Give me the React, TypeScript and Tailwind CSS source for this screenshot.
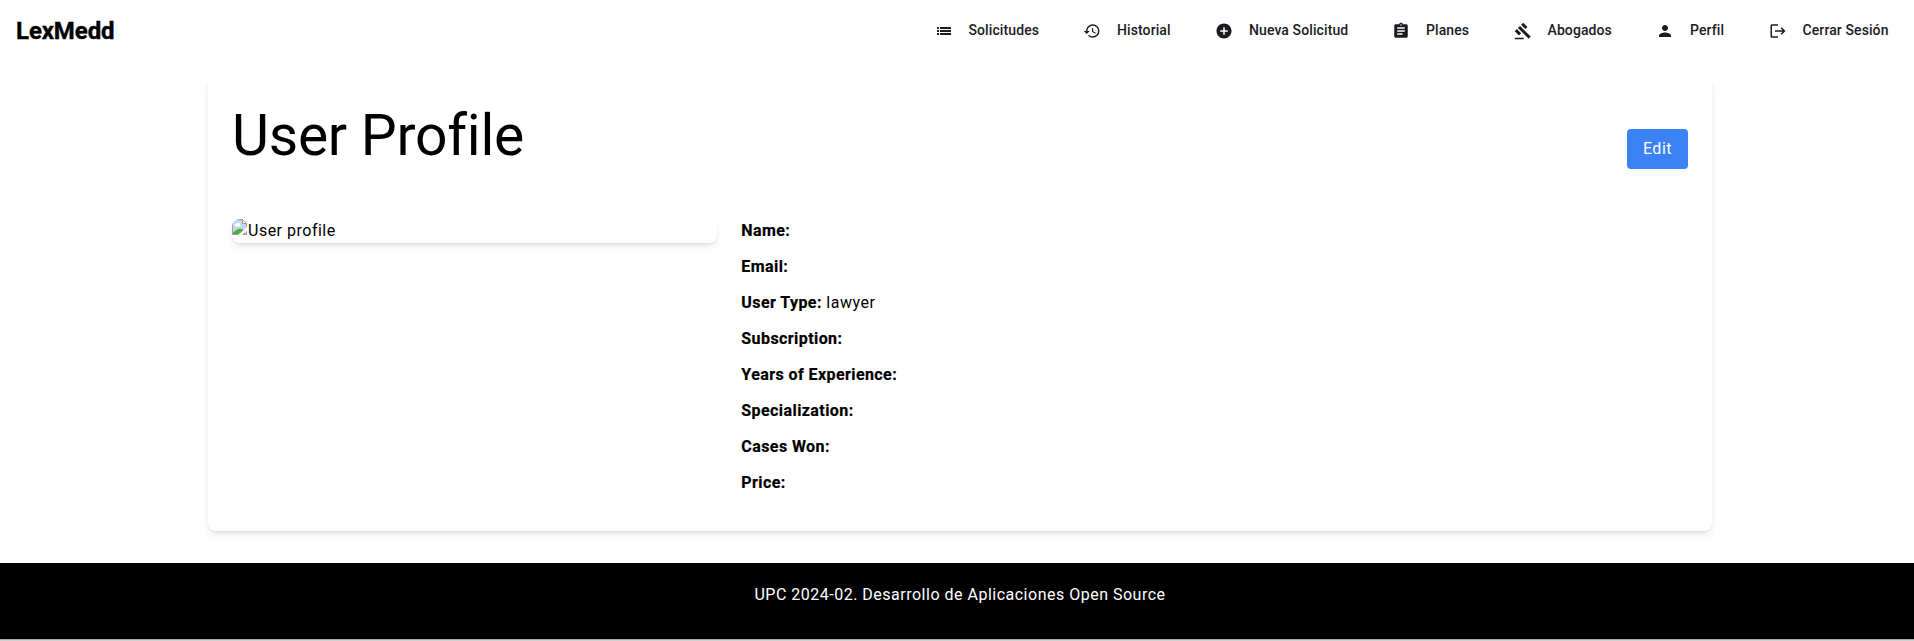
import type { IconType } from 'react-icons';
import { MdHistory, MdAddCircle, MdAssignment, MdGavel, MdPerson, MdLogout } from 'react-icons/md';

function ListIcon({ className }: { className?: string }) {
  return (
    <svg viewBox="0 0 18 18" fill="currentColor" shapeRendering="crispEdges" className={className} aria-hidden="true">
      <path d="M2 5h2v2H2zM2 8h2v2H2zM2 11h2v2H2zM5 5h11v2H5zM5 8h11v2H5zM5 11h11v2H5z" />
    </svg>
  );
}

const links: { label: string; Icon: IconType | typeof ListIcon; width: string }[] = [
  { label: 'Solicitudes', Icon: ListIcon, width: 'w-[148.5px]' },
  { label: 'Historial', Icon: MdHistory, width: 'w-[132px]' },
  { label: 'Nueva Solicitud', Icon: MdAddCircle, width: 'w-[177px]' },
  { label: 'Planes', Icon: MdAssignment, width: 'w-[121.5px]' },
  { label: 'Abogados', Icon: MdGavel, width: 'w-[142.5px]' },
  { label: 'Perfil', Icon: MdPerson, width: 'w-[112.5px]' },
  { label: 'Cerrar Sesión', Icon: MdLogout, width: 'w-[122px]' },
];

const fields = [
  { label: 'Name:' },
  { label: 'Email:' },
  { label: 'User Type:', value: 'lawyer' },
  { label: 'Subscription:' },
  { label: 'Years of Experience:' },
  { label: 'Specialization:' },
  { label: 'Cases Won:' },
  { label: 'Price:' },
];

function BrokenImage() {
  return (
    <svg width="16" height="16" viewBox="0 0 16 16" className="shrink-0" aria-hidden="true">
      <path d="M0.5 0.5H10.5L14.5 4.5V15.5H0.5Z" fill="#c3d5f6" stroke="#9b9b9b" />
      <path d="M2.5 6.5a2 2 0 0 1 2-2a2 2 0 0 1 3.5 1a1.2 1.2 0 0 1 0 2H3.5Z" fill="#fff" />
      <path d="M1 15V14C4 10 7 9 10 10L13 12V15Z" fill="#55ab3c" />
      <path d="M16 7L6 16H10L16 11Z" fill="#fff" />
      <path d="M10.5 0.5V4.5H14.5Z" fill="#fff" stroke="#9b9b9b" />
    </svg>
  );
}

export default function App() {
  return (
    <div className="flex h-[641px] flex-col overflow-hidden bg-white font-[Roboto,sans-serif] text-base tracking-[0.5px] text-black">
      <header className="flex h-16 shrink-0 items-center justify-between pl-4">
        <span className="pb-0.5 text-2xl font-bold tracking-[-0.1px] [-webkit-text-stroke:0.4px_black]">LexMedd</span>
        <nav className="flex pb-0.5 text-sm font-medium tracking-[0.1px] text-[#1a1b1f]">
          {links.map(({ label, Icon, width }) => (
            <a key={label} className={`flex items-center gap-4 whitespace-nowrap ${width}`}>
              <Icon className="size-[18px] shrink-0" />
              <span className="pb-0.5">{label}</span>
            </a>
          ))}
          <span className="w-[23.5px]" />
        </nav>
      </header>

      <main className="ml-[208px] mt-3 h-[455px] w-[1504px] shrink-0 rounded-lg px-6 pb-6 pt-7 shadow-md">
        <div className="mb-[25px] flex h-[90px] items-center justify-between">
          <h1 className="self-start text-[57px] leading-[64px] tracking-[-0.25px]">User Profile</h1>
          <button className="h-10 rounded bg-[#3b82f6] px-4 text-white">Edit</button>
        </div>
        <div className="flex">
          <div className="w-1/3">
            <div className="flex h-6 overflow-hidden rounded-lg shadow-md">
              <BrokenImage />
              <span>User profile</span>
            </div>
          </div>
          <div className="w-2/3 pl-6">
            {fields.map(({ label, value }) => (
              <p key={label} className="mb-3">
                <strong className="font-bold tracking-[0.42px] [-webkit-text-stroke:0.2px_black]">{label}</strong> {value}
              </p>
            ))}
          </div>
        </div>
      </main>

      <footer className="mt-8 flex h-[76px] shrink-0 justify-center bg-black pl-[6px] pt-5 text-white">
        UPC 2024-02. Desarrollo de Aplicaciones Open Source
      </footer>
      <div className="h-px shrink-0 bg-[#a8a8a8]" />
      <div className="h-px shrink-0 bg-[#d2d2d2]" />
    </div>
  );
}
